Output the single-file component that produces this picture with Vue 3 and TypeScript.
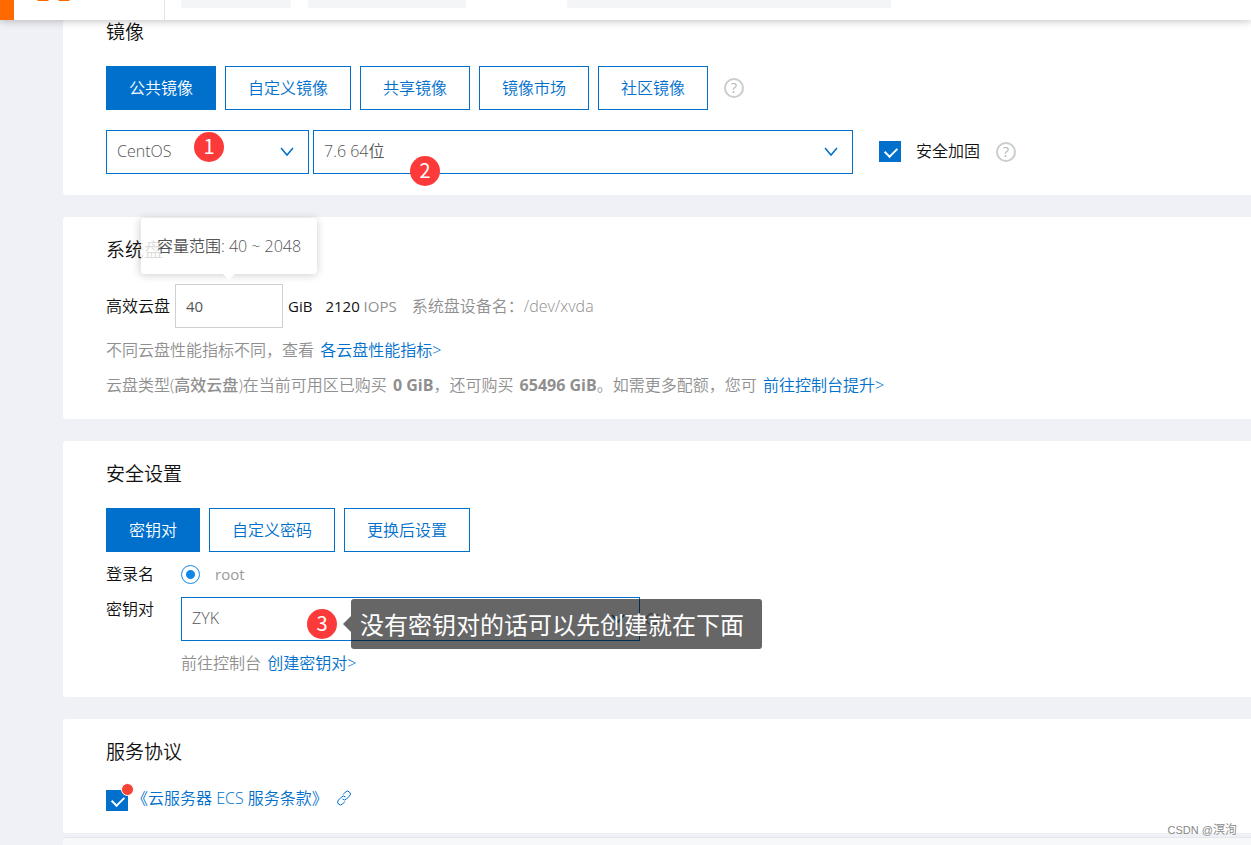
<script setup lang="ts">
import { ref } from 'vue'

const imageTabs = ['公共镜像', '自定义镜像', '共享镜像', '镜像市场', '社区镜像']
const credentialTabs = ['密钥对', '自定义密码', '更换后设置']

const imageTab = ref(0)
const credentialTab = ref(0)
const distribution = ref('CentOS')
const version = ref('7.6 64位')
const hardening = ref(true)
const diskSize = ref('40')
const keyPair = ref('ZYK')
const agreed = ref(true)
</script>

<template>
  <div class="page">
    <header class="topbar">
      <div class="menu-block"></div>
      <div class="brand">
        <svg width="40" height="4" viewBox="0 0 40 4" aria-hidden="true">
          <path d="M3 0h12l-1 1H4zM24 0h12l-1 1H25z" fill="#ff6a00" />
        </svg>
      </div>
      <div class="slot slot-a"></div>
      <div class="slot slot-b"></div>
      <div class="slot slot-c"></div>
    </header>

    <main class="content">
      <section class="card card-first">
        <h2>镜像</h2>
        <div class="tabs">
          <button
            v-for="(tab, i) in imageTabs"
            :key="tab"
            type="button"
            class="tab"
            :class="{ active: imageTab === i }"
            @click="imageTab = i"
          >{{ tab }}</button>
          <button type="button" class="help help-tabs" aria-label="帮助">?</button>
        </div>
        <div class="image-row">
          <div class="picker picker-distribution">
            <select v-model="distribution" aria-label="镜像">
              <option>CentOS</option>
            </select>
            <svg class="chevron" width="14" height="10" viewBox="0 0 14 10" aria-hidden="true">
              <path d="M1 1l6 7 6-7" />
            </svg>
            <span class="badge badge-one">1</span>
          </div>
          <div class="picker picker-version">
            <select v-model="version" aria-label="版本">
              <option>7.6 64位</option>
            </select>
            <svg class="chevron" width="14" height="10" viewBox="0 0 14 10" aria-hidden="true">
              <path d="M1 1l6 7 6-7" />
            </svg>
            <span class="badge badge-two">2</span>
          </div>
          <label class="check">
            <input v-model="hardening" type="checkbox" />
            <span>安全加固</span>
          </label>
          <button type="button" class="help" aria-label="帮助">?</button>
        </div>
      </section>

      <section class="card">
        <h2>系统盘</h2>
        <div class="disk-row">
          <label for="disk-size">高效云盘</label>
          <div class="size-field">
            <input id="disk-size" v-model="diskSize" type="text" />
            <div class="tooltip" role="tooltip">容量范围: 40 ~ 2048</div>
          </div>
          <span class="unit">GiB</span>
          <span class="iops">2120 <span class="muted">IOPS</span></span>
          <span class="muted device">系统盘设备名：/dev/xvda</span>
        </div>
        <p class="hint">不同云盘性能指标不同，查看 <a href="#">各云盘性能指标&gt;</a></p>
        <p class="hint quota">
          云盘类型(<span class="disk-name">高效云盘</span>)在当前可用区已购买 <strong>0 GiB</strong>，还可购买
          <strong>65496 GiB</strong>。如需更多配额，您可 <a href="#">前往控制台提升&gt;</a>
        </p>
      </section>

      <section class="card">
        <h2>安全设置</h2>
        <div class="tabs">
          <button
            v-for="(tab, i) in credentialTabs"
            :key="tab"
            type="button"
            class="tab"
            :class="{ active: credentialTab === i }"
            @click="credentialTab = i"
          >{{ tab }}</button>
        </div>
        <div class="form-row login-row">
          <span class="form-label">登录名</span>
          <label class="radio">
            <input type="radio" name="login" checked />
            <span>root</span>
          </label>
        </div>
        <div class="form-row">
          <label class="form-label" for="key-pair">密钥对</label>
          <div class="key-column">
            <div class="key-line">
              <div class="picker picker-key">
                <select id="key-pair" v-model="keyPair">
                  <option>ZYK</option>
                </select>
                <svg class="chevron" width="14" height="10" viewBox="0 0 14 10" aria-hidden="true">
                  <path d="M1 1l6 7 6-7" />
                </svg>
                <span class="badge badge-three">3</span>
                <div class="note">没有密钥对的话可以先创建就在下面</div>
              </div>
              <button type="button" class="refresh" aria-label="刷新">
                <svg width="14" height="14" viewBox="0 0 14 14" aria-hidden="true">
                  <path d="M12 5A5.5 5.5 0 1 0 12.500 8M12.500 2v3.500H9" />
                </svg>
              </button>
            </div>
            <p class="hint key-hint">前往控制台 <a href="#">创建密钥对&gt;</a></p>
          </div>
        </div>
      </section>

      <section class="card">
        <h2>服务协议</h2>
        <div class="terms">
          <span class="terms-check">
            <input id="agree" v-model="agreed" type="checkbox" aria-label="服务协议" />
            <span class="dot"></span>
          </span>
          <a href="#" class="terms-link">
            <span>《云服务器 ECS 服务条款》</span>
            <svg width="16" height="16" viewBox="0 0 16 16" aria-hidden="true">
              <path d="M7 4.500l2.500-2.500a2.800 2.800 0 0 1 4 0a2.800 2.800 0 0 1 0 4L10.500 9a2.800 2.800 0 0 1-4 0M9 11.500L6.500 14a2.800 2.800 0 0 1-4 0a2.800 2.800 0 0 1 0-4L5.500 7a2.800 2.800 0 0 1 4 0" />
            </svg>
          </a>
        </div>
      </section>
      <div class="footer-bar"></div>
    </main>
    <span class="watermark">CSDN @<span class="author">溟洵</span></span>
  </div>
</template>

<style>
body {
  background: #eff1f6;
}
</style>

<style scoped>
* {
  box-sizing: border-box;
}
.page {
  position: relative;
  height: 100vh;
  overflow: hidden;
  background: #eff1f6;
  color: #111;
  font-family: "Open Sans", "Noto Sans CJK SC", sans-serif;
  font-size: 16px;
  font-weight: 350;
  line-height: 24px;
}
button,
input,
select {
  margin: 0;
  font: inherit;
}
.topbar {
  position: relative;
  z-index: 5;
  display: flex;
  height: 20px;
  background: #fff;
  box-shadow: 0 1px 8px rgba(0, 0, 0, 0.25);
}
.menu-block {
  width: 14px;
  background: #ff6a00;
}
.brand {
  display: flex;
  align-items: flex-start;
  width: 151px;
  padding-left: 20px;
  border-right: 1px solid #e3e4e6;
}
.slot {
  height: 8px;
  border-radius: 0 0 2px 2px;
  background: #f4f5f7;
}
.slot-a {
  width: 110px;
  margin-left: 16px;
}
.slot-b {
  width: 158px;
  margin-left: 17px;
}
.slot-c {
  width: 324px;
  margin-left: 101px;
  border-radius: 0;
}
.content {
  padding-left: 63px;
}
.card {
  margin-bottom: 22px;
  padding: 21px 43px 22px;
  border-radius: 3px 0 0 3px;
  background: #fff;
}
.card-first {
  padding-top: 0;
  padding-bottom: 21px;
}
h2 {
  margin: 0 0 22px;
  font-size: 19px;
  font-weight: 350;
  line-height: 24px;
}
.tabs {
  display: flex;
  align-items: center;
  gap: 9px;
}
.tab {
  height: 44px;
  padding: 0 22px;
  border: 1px solid #0070cc;
  background: #fff;
  color: #0070cc;
}
.tab.active {
  background: #0070cc;
  color: #fff;
}
.help {
  flex: none;
  width: 20px;
  height: 20px;
  padding: 0;
  border: 2px solid #ccc;
  border-radius: 50%;
  background: transparent;
  color: #b5b5b5;
  font-size: 14px;
  font-weight: 400;
  line-height: 16px;
  text-align: center;
}
.help-tabs {
  margin-left: 7px;
}
.image-row {
  display: flex;
  align-items: center;
  gap: 4px;
  margin-top: 20px;
}
.picker {
  position: relative;
  flex: 0 1 auto;
}
.picker-distribution {
  width: 203px;
}
.picker-version {
  width: 540px;
}
.picker-key {
  width: 459px;
}
.picker select {
  display: block;
  width: 100%;
  height: 44px;
  padding: 0 10px 2px;
  border: 1px solid #0070cc;
  border-radius: 0;
  background: #fff;
  color: #555;
  font-size: 16px;
  appearance: none;
}
.chevron {
  position: absolute;
  top: 17px;
  right: 15px;
  fill: none;
  stroke: #0070cc;
  stroke-width: 1.500;
}
.badge {
  position: absolute;
  z-index: 2;
  width: 30px;
  height: 30px;
  border-radius: 50%;
  background: #fc3a3a;
  color: #fff;
  font-family: "Noto Sans CJK SC", sans-serif;
  font-size: 20px;
  font-weight: 400;
  line-height: 28px;
  text-align: center;
}
.badge-one {
  top: 2px;
  left: 88px;
}
.badge-two {
  top: 26px;
  left: 97px;
}
.badge-three {
  top: 12px;
  left: 126px;
}
.check {
  display: flex;
  align-items: center;
  gap: 15px;
  margin-right: 12px;
  margin-left: 22px;
  padding-bottom: 2px;
}
input[type="checkbox"] {
  position: relative;
  flex: none;
  width: 22px;
  height: 21px;
  background: #0070cc;
  appearance: none;
}
input[type="checkbox"]:checked::after {
  content: "";
  position: absolute;
  top: 4px;
  left: 8px;
  width: 6px;
  height: 10px;
  border: solid #fff;
  border-width: 0 2px 2px 0;
  transform: rotate(45deg);
}
.disk-row {
  display: flex;
  align-items: center;
}
.size-field {
  position: relative;
  width: 108px;
  margin: 0 5px;
}
.size-field input {
  display: block;
  width: 100%;
  height: 44px;
  padding: 0 10px;
  border: 1px solid #d0d0d0;
  background: #fff;
  color: #555;
  font-size: 15px;
  font-weight: 400;
}
.tooltip {
  position: absolute;
  bottom: 54px;
  left: 50%;
  padding: 16px;
  border-radius: 4px;
  background: rgba(255, 255, 255, 0.85);
  box-shadow: 0 1px 8px rgba(0, 0, 0, 0.2);
  color: #555;
  white-space: nowrap;
  transform: translateX(-50%);
}
.tooltip::after {
  content: "";
  position: absolute;
  top: 100%;
  left: 50%;
  border: 6px solid transparent;
  border-top-color: #fff;
  transform: translateX(-50%);
}
.unit,
.iops {
  font-size: 15px;
  font-weight: 400;
}
.unit,
.iops {
  margin-right: 13px;
}
.muted,
.hint {
  color: #8f8f8f;
}
.device {
  margin-left: 2px;
}
.hint {
  margin: 10px 0 0;
}
.hint a,
.hint strong {
  margin-left: 2px;
}
.quota {
  margin-top: 11px;
}
.disk-name {
  font-weight: 500;
}
strong {
  font-weight: 700;
}
a {
  color: #0070cc;
  text-decoration: none;
}
.form-row {
  display: flex;
}
.login-row {
  margin: 10px 0 11px;
}
.form-label {
  flex: none;
  width: 75px;
}
.radio {
  display: flex;
  align-items: center;
  gap: 15px;
  color: #999;
  font-size: 15px;
  font-weight: 400;
}
.radio input {
  width: 19px;
  height: 19px;
  border: 1px solid #1188e8;
  border-radius: 50%;
  background: radial-gradient(circle, #1188e8 4px, #fff 5px);
  appearance: none;
}
.key-column {
  flex: 1;
}
.key-line {
  display: flex;
  align-items: center;
}
.refresh {
  position: relative;
  display: flex;
  margin-left: 5px;
  padding: 0;
  border: 0;
  background: none;
}
.refresh svg {
  fill: none;
  stroke: #999;
  stroke-width: 1.500;
}
.note {
  position: absolute;
  z-index: 1;
  top: 2px;
  left: 170px;
  padding: 1px 18px 0 9px;
  border-radius: 3px;
  background: rgba(0, 0, 0, 0.6);
  color: #fff;
  font-size: 24px;
  font-weight: 400;
  line-height: 49px;
  white-space: nowrap;
}
.note::before {
  content: "";
  position: absolute;
  top: 17px;
  right: 100%;
  border: solid transparent;
  border-width: 8px 8px 8px 0;
  border-right-color: rgba(0, 0, 0, 0.6);
}
.terms {
  display: flex;
  align-items: flex-end;
  height: 25px;
}
.terms-check {
  position: relative;
  display: flex;
}
.dot {
  position: absolute;
  top: -7px;
  right: -6px;
  width: 13px;
  height: 13px;
  border: 1px solid #fff;
  border-radius: 50%;
  background: #f54336;
}
.terms-link {
  display: flex;
  align-items: center;
  align-self: flex-start;
  gap: 8px;
  margin-left: 4px;
}
.terms-link svg {
  fill: none;
  stroke: #0070cc;
}
.card:last-of-type {
  margin-bottom: 4px;
}
.footer-bar {
  height: 20px;
  border-top: 1px solid #e6e7ea;
  background: #f7f8fa;
}
.watermark {
  position: absolute;
  right: 14px;
  bottom: 3px;
  color: #888;
  font-family: "Liberation Sans", "Noto Sans CJK SC", sans-serif;
  font-size: 11px;
}
.author {
  font-size: 12px;
}
</style>
